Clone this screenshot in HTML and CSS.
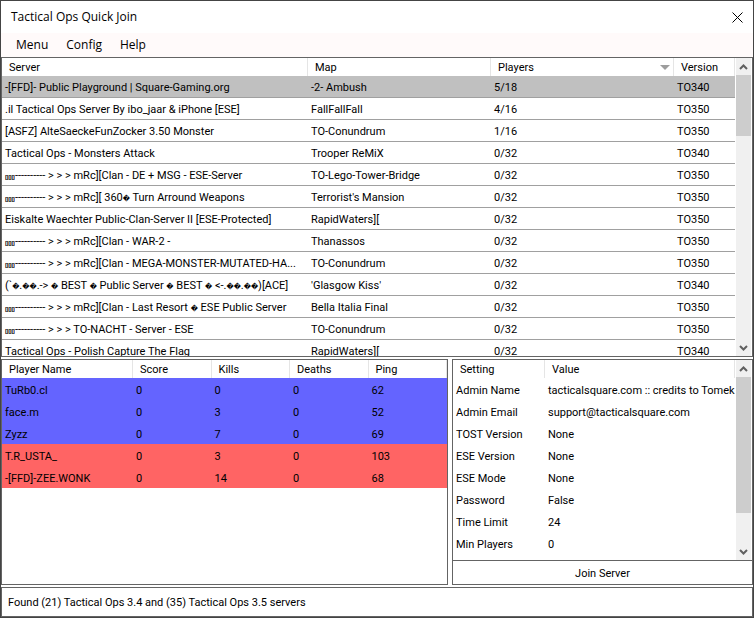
FILE: index.html
```html
<!DOCTYPE html>
<html lang="en">
<head>
<meta charset="utf-8">
<title>Tactical Ops Quick Join</title>
<link rel="stylesheet" href="styles.css">
</head>
<body>
<div class="window">
  <header class="titlebar">
    <h1>Tactical Ops Quick Join</h1>
    <button class="close" type="button" aria-label="Close">
      <svg width="11" height="11" viewBox="0 0 11 11"><path d="M.5 .5l10 10M10.5 .5l-10 10" fill="none" stroke="#000" stroke-width="1"/></svg>
    </button>
  </header>
  <nav class="menubar">
    <button type="button">Menu</button>
    <button type="button">Config</button>
    <button type="button">Help</button>
  </nav>
  <main class="content">
    <section class="panel servers" aria-label="Servers">
      <div class="list">
        <table class="lined">
          <colgroup><col class="c-server"><col class="c-map"><col class="c-players"><col class="c-version"></colgroup>
          <thead><tr><th>Server</th><th>Map</th><th class="sorted">Players<svg width="10" height="5" viewBox="0 0 10 5"><path d="M0 0h10L5 5z" fill="#9d9d9d"/></svg></th><th>Version</th></tr></thead>
          <tbody>
            <tr class="selected"><td>-[FFD]- Public Playground | Square-Gaming.org</td><td>-2- Ambush</td><td>5/18</td><td>TO340</td></tr>
            <tr><td>.il Tactical Ops Server By ibo_jaar &amp; iPhone [ESE]</td><td>FallFallFall</td><td>4/16</td><td>TO350</td></tr>
            <tr><td>[ASFZ] AlteSaeckeFunZocker 3.50 Monster</td><td>TO-Conundrum</td><td>1/16</td><td>TO350</td></tr>
            <tr><td>Tactical Ops - Monsters Attack</td><td>Trooper ReMiX</td><td>0/32</td><td>TO340</td></tr>
            <tr><td><span class="tofu">▯▯▯</span>---------- &gt; &gt; &gt; mRc][Clan - DE + MSG - ESE-Server</td><td>TO-Lego-Tower-Bridge</td><td>0/32</td><td>TO350</td></tr>
            <tr><td><span class="tofu">▯▯▯</span>---------- &gt; &gt; &gt; mRc][ 360<span class="bad">�</span> Turn Arround Weapons</td><td>Terrorist's Mansion</td><td>0/32</td><td>TO350</td></tr>
            <tr><td>Eiskalte Waechter Public-Clan-Server II [ESE-Protected]</td><td>RapidWaters][</td><td>0/32</td><td>TO350</td></tr>
            <tr><td><span class="tofu">▯▯▯</span>---------- &gt; &gt; &gt; mRc][Clan - WAR-2 -</td><td>Thanassos</td><td>0/32</td><td>TO350</td></tr>
            <tr><td><span class="tofu">▯▯▯</span>---------- &gt; &gt; &gt; mRc][Clan - MEGA-MONSTER-MUTATED-HA...</td><td>TO-Conundrum</td><td>0/32</td><td>TO350</td></tr>
            <tr><td>(`<span class="bad">�</span>.<span class="bad">��</span>.-&gt; <span class="bad">�</span> BEST <span class="bad">�</span> Public Server <span class="bad">�</span> BEST <span class="bad">�</span> &lt;-.<span class="bad">��</span>.<span class="bad">��</span>)[ACE]</td><td>'Glasgow Kiss'</td><td>0/32</td><td>TO340</td></tr>
            <tr><td><span class="tofu">▯▯▯</span>---------- &gt; &gt; &gt; mRc][Clan - Last Resort <span class="bad">�</span> ESE Public Server</td><td>Bella Italia Final</td><td>0/32</td><td>TO350</td></tr>
            <tr><td><span class="tofu">▯▯▯</span>---------- &gt; &gt; &gt; TO-NACHT - Server - ESE</td><td>TO-Conundrum</td><td>0/32</td><td>TO350</td></tr>
            <tr><td>Tactical Ops - Polish Capture The Flag</td><td>RapidWaters][</td><td>0/32</td><td>TO340</td></tr>
          </tbody>
        </table>
      </div>
      <div class="scroll scroll-servers" aria-hidden="true">
        <svg class="arrow" viewBox="0 0 15 17"><path d="M4 11l3.5-3.5L11 11" /></svg>
        <span class="track"><span class="thumb"></span></span>
        <svg class="arrow" viewBox="0 0 15 17"><path d="M4 7l3.5 3.5L11 7" /></svg>
      </div>
    </section>
    <div class="lower">
      <section class="panel players" aria-label="Players">
        <div class="list">
          <table>
            <colgroup><col class="c-name"><col class="c-stat"><col class="c-stat"><col class="c-stat"><col class="c-stat"></colgroup>
            <thead><tr><th>Player Name</th><th>Score</th><th>Kills</th><th>Deaths</th><th>Ping</th></tr></thead>
            <tbody>
              <tr class="blue"><td>TuRb0.cl</td><td>0</td><td>0</td><td>0</td><td>62</td></tr>
              <tr class="blue"><td>face.m</td><td>0</td><td>3</td><td>0</td><td>52</td></tr>
              <tr class="blue"><td>Zyzz</td><td>0</td><td>7</td><td>0</td><td>69</td></tr>
              <tr class="red"><td>T.R_USTA_</td><td>0</td><td>3</td><td>0</td><td>103</td></tr>
              <tr class="red"><td>-[FFD]-ZEE.WONK</td><td>0</td><td>14</td><td>0</td><td>68</td></tr>
            </tbody>
          </table>
        </div>
      </section>
      <section class="panel details" aria-label="Server settings">
        <div class="settings">
          <div class="list">
            <table>
              <colgroup><col class="c-setting"><col></colgroup>
              <thead><tr><th>Setting</th><th>Value</th></tr></thead>
              <tbody>
                <tr><td>Admin Name</td><td>tacticalsquare.com :: credits to Tomek</td></tr>
                <tr><td>Admin Email</td><td>support@tacticalsquare.com</td></tr>
                <tr><td>TOST Version</td><td>None</td></tr>
                <tr><td>ESE Version</td><td>None</td></tr>
                <tr><td>ESE Mode</td><td>None</td></tr>
                <tr><td>Password</td><td>False</td></tr>
                <tr><td>Time Limit</td><td>24</td></tr>
                <tr><td>Min Players</td><td>0</td></tr>
              </tbody>
            </table>
          </div>
          <div class="scroll scroll-settings" aria-hidden="true">
            <svg class="arrow" viewBox="0 0 15 17"><path d="M4 11l3.5-3.5L11 11" /></svg>
            <span class="track"><span class="thumb"></span></span>
            <svg class="arrow" viewBox="0 0 15 17"><path d="M4 7l3.5 3.5L11 7" /></svg>
          </div>
        </div>
        <button class="join" type="button">Join Server</button>
      </section>
    </div>
    <footer class="panel status">Found (21) Tactical Ops 3.4 and (35) Tactical Ops 3.5 servers</footer>
  </main>
</div>
</body>
</html>
```
FILE: styles.css
```css
* { box-sizing: border-box; }

body {
  margin: 0;
  background: #fff;
  color: #000;
  font: 11px/16px Roboto, "Liberation Sans", sans-serif;
}

button {
  border: 0;
  padding: 0;
  background: none;
  color: inherit;
  font: inherit;
}

.window {
  display: flex;
  flex-direction: column;
  height: 100vh;
  border: 1px solid #444;
}

.titlebar {
  display: flex;
  align-items: center;
  justify-content: space-between;
  height: 32px;
  padding: 0 10px;
}

.titlebar h1 {
  margin: 0;
  font: 12px/16px "Open Sans", "Noto Sans", sans-serif;
}

.close {
  display: flex;
}

.menubar {
  display: flex;
  gap: 18px;
  height: 24px;
  padding: 0 15px;
  background: #fffafa;
  font: 12px/16px "Open Sans", "Noto Sans", sans-serif;
}

.content {
  flex: 1;
  min-height: 0;
  display: flex;
  flex-direction: column;
  gap: 2px;
}

.panel {
  border: 1px solid #646464;
  background: #fff;
  min-width: 0;
}

.servers {
  display: flex;
  flex: 299 1 0;
  min-height: 0;
}

.lower {
  display: grid;
  grid-template-columns: 447fr 301fr;
  gap: 4px;
  flex: 226 1 0;
  min-height: 0;
}

.status {
  height: 30px;
  padding: 7px 6px;
}

.list {
  flex: 1;
  min-width: 0;
  overflow: hidden;
}

table {
  width: 100%;
  table-layout: fixed;
  border-collapse: separate;
  border-spacing: 0;
}

th,
td {
  overflow: hidden;
  text-align: left;
  font-weight: 400;
  white-space: pre;
}

th {
  height: 18px;
  padding: 2px 7px 0;
  border-right: 1px solid #e5e5e5;
}

td {
  height: 22px;
  padding: 3px 0 0 3px;
}

.lined td {
  padding-top: 2px;
  border-bottom: 1px solid #a0a0a0;
}

.selected {
  background: #c0c0c0;
}

.sorted svg {
  float: right;
  margin: 5px -4px 0 0;
}

.blue { background: #6464ff; }
.red { background: #ff6464; }

.c-server { width: 306px; }
.c-map { width: 183px; }
.c-players { width: auto; }
.c-version { width: 61px; }
.c-name { width: 131px; }
.c-setting { width: 92px; }

.tofu {
  font: 6px/6px "DejaVu Sans", sans-serif;
  text-shadow: 0 0 currentColor, 0 0 currentColor;
}

.bad {
  font: 7px/7px "DejaVu Sans", sans-serif;
}

.scroll {
  display: flex;
  flex-direction: column;
  width: 15px;
  margin: 0 1px;
  background: #f0f0f0;
}

.arrow {
  flex: none;
  width: 15px;
  height: 17px;
}

.arrow path {
  fill: none;
  stroke: #606060;
  stroke-width: 2;
}

.track {
  flex: 1;
}

.thumb {
  display: block;
  background: #cdcdcd;
}

.scroll-servers .thumb { height: 23%; }
.scroll-settings .thumb { height: 82%; }

.details {
  display: flex;
  flex-direction: column;
}

.settings {
  flex: 1;
  min-height: 0;
  display: flex;
}

.join {
  height: 24px;
  padding-top: 2px;
  border-top: 1px solid #646464;
}
```
